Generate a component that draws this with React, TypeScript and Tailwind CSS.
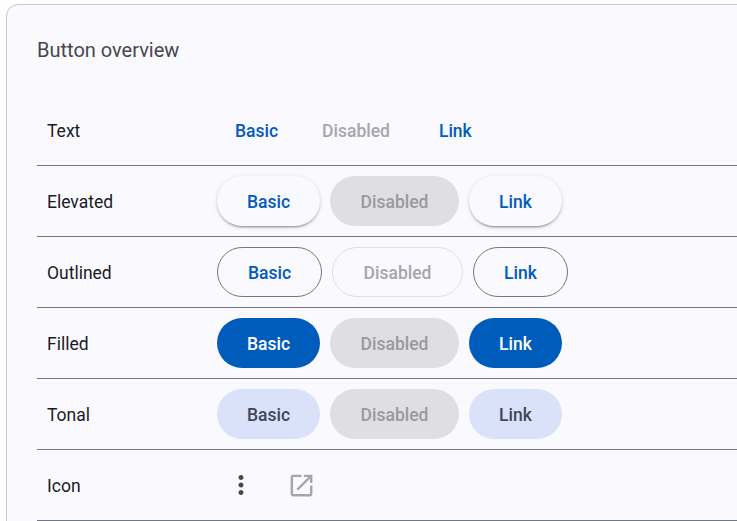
type V = "elevated" | "outlined" | "filled" | "tonal";

const btn =
  "h-[50px] rounded-full flex items-center justify-center pt-[2px] text-[17.5px] font-medium shrink-0";

const shadow = "shadow-[0_3px_1px_-2px_rgba(0,0,0,0.2),0_2px_2px_0_rgba(0,0,0,0.14),0_1px_5px_0_rgba(0,0,0,0.12)]";

const styles: Record<V, [string, string, string]> = {
  elevated: [
    `w-[103px] bg-[#faf9fe] text-[#005cbb] ${shadow}`,
    "w-[129px] bg-[#dfdfe3] text-[#99999e]",
    `w-[93px] bg-[#faf9fe] text-[#005cbb] ${shadow}`,
  ],
  outlined: [
    "w-[105px] border border-[#74777f] text-[#005cbb]",
    "w-[131px] border border-[#dfdfe3] text-[#a6a6aa]",
    "w-[95px] border border-[#74777f] text-[#005cbb]",
  ],
  filled: [
    "w-[103px] bg-[#005cbb] text-white",
    "w-[129px] bg-[#dfdfe3] text-[#99999e]",
    "w-[93px] bg-[#005cbb] text-white",
  ],
  tonal: [
    "w-[103px] bg-[#dae2f9] text-[#3f4759]",
    "w-[129px] bg-[#dfdfe3] text-[#99999e]",
    "w-[93px] bg-[#dae2f9] text-[#3f4759]",
  ],
};

function Row({ label, children }: { label: string; children: React.ReactNode }) {
  return (
    <div className="flex h-[71px] items-center border-b border-[#74777f]">
      <div className="w-[180px] pl-2.5 pt-[2px] text-[17.5px] text-[#1a1b1f]">{label}</div>
      <div className="flex items-center">{children}</div>
    </div>
  );
}

function Buttons({ v }: { v: V }) {
  const [a, b, c] = styles[v];
  return (
    <div className="flex gap-2.5">
      <div className={`${btn} ${a}`}>Basic</div>
      <div className={`${btn} ${b}`}>Disabled</div>
      <div className={`${btn} ${c}`}>Link</div>
    </div>
  );
}

export default function App() {
  return (
    <div className="h-[521px] w-[737px] overflow-hidden bg-white pl-1.5 pt-1 font-['Roboto',sans-serif]">
      <div className="h-[600px] w-[780px] rounded-xl border border-[#c4c6d0] bg-[#faf9fe] pl-[30px]">
        <div className="pt-[32px] text-[20px] leading-[26px] text-[#44474e]">Button overview</div>
        <div className="pt-[32px]">
          <Row label="Text">
            <div className="flex items-center pt-[2px] text-[17.5px] font-medium">
              <div className="ml-[18px] text-[#005cbb]">Basic</div>
              <div className="ml-[44px] text-[#a6a6aa]">Disabled</div>
              <div className="ml-[49px] text-[#005cbb]">Link</div>
            </div>
          </Row>
          <Row label="Elevated"><Buttons v="elevated" /></Row>
          <Row label="Outlined"><Buttons v="outlined" /></Row>
          <Row label="Filled"><Buttons v="filled" /></Row>
          <Row label="Tonal"><Buttons v="tonal" /></Row>
          <Row label="Icon">
            <div className="flex items-center">
              <svg className="ml-[9px]" width="30" height="30" viewBox="0 0 24 24" fill="#44474e">
                <path d="M12 8c1.1 0 2-.9 2-2s-.9-2-2-2-2 .9-2 2 .9 2 2 2zm0 2c-1.1 0-2 .9-2 2s.9 2 2 2 2-.9 2-2-.9-2-2-2zm0 6c-1.1 0-2 .9-2 2s.9 2 2 2 2-.9 2-2-.9-2-2-2z" />
              </svg>
              <svg className="ml-[31px]" width="29" height="29" viewBox="0 0 24 24" fill="#a6a6aa">
                <path d="M19 19H5V5h7V3H5c-1.11 0-2 .9-2 2v14c0 1.1.89 2 2 2h14c1.1 0 2-.9 2-2v-7h-2v7zM14 3v2h3.59l-9.83 9.83 1.41 1.41L19 6.41V10h2V3h-7z" />
              </svg>
            </div>
          </Row>
        </div>
      </div>
    </div>
  );
}
